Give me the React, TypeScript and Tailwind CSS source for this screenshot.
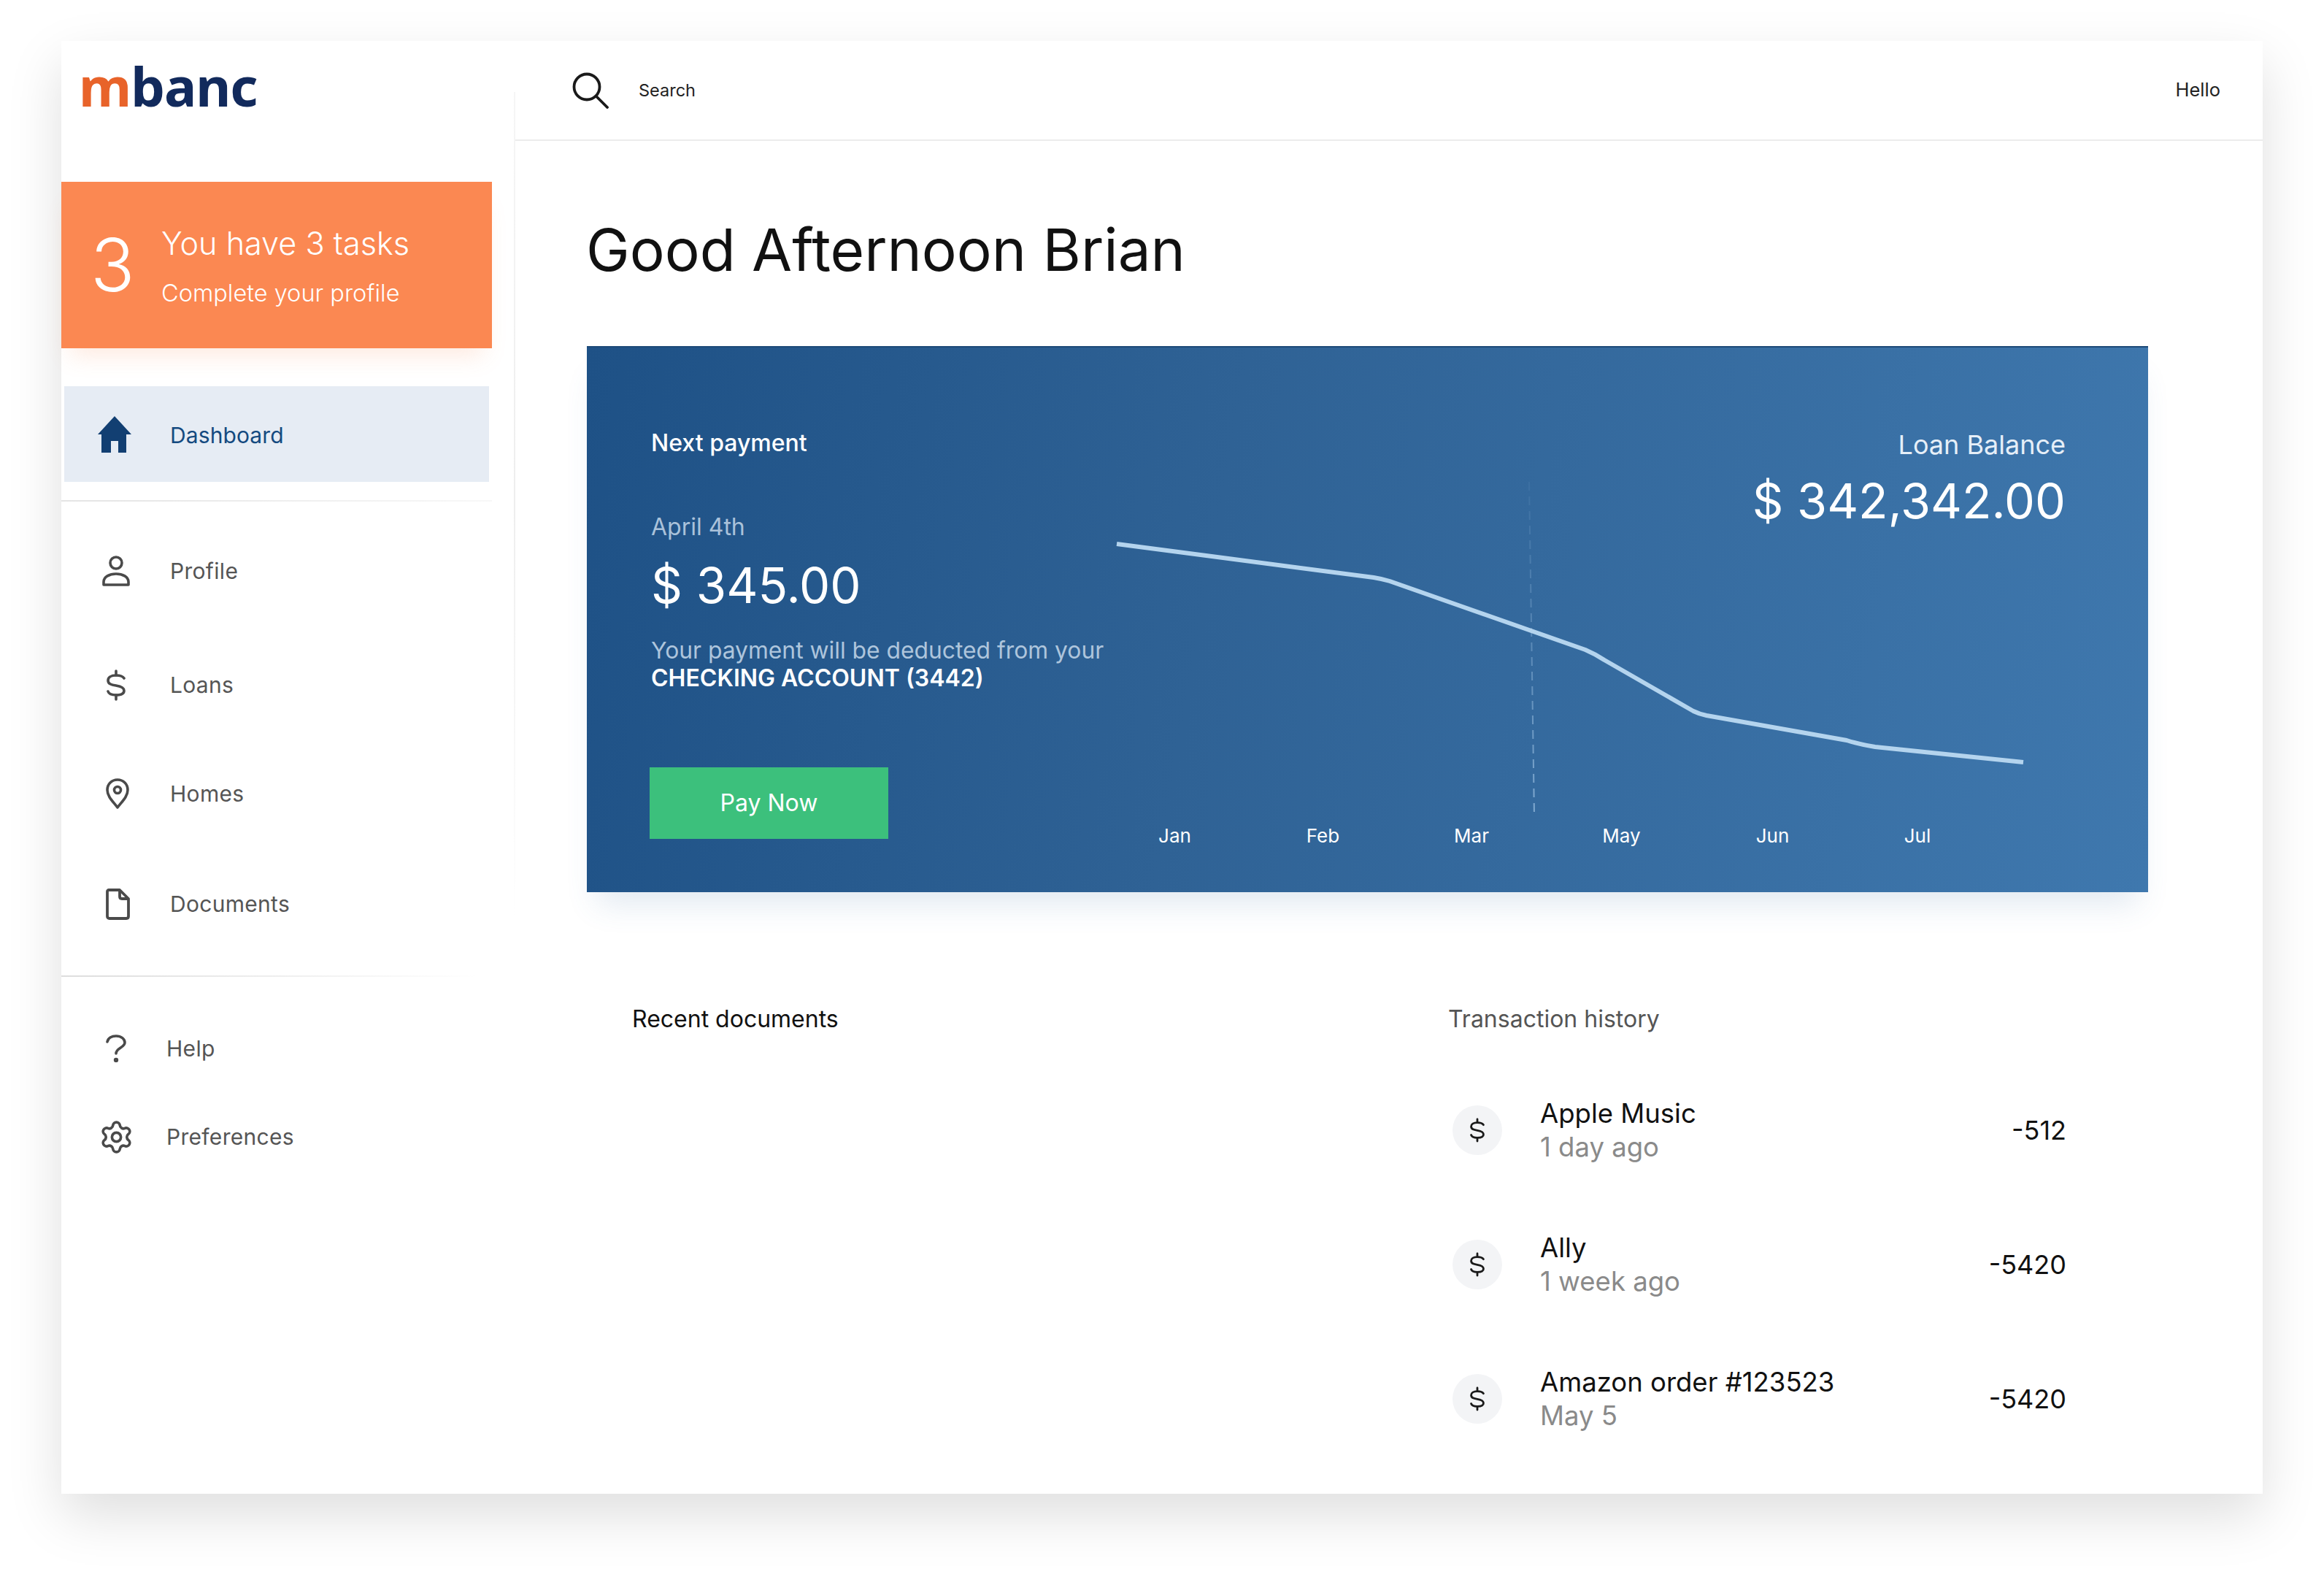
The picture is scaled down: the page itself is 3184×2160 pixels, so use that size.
import React from "react";

const ink = "#4a4a4a";

function Home() {
  return (
    <svg width="46" height="50" viewBox="0 0 46 50" fill="#123f72">
      <path d="M23 0 L46 25 L39 25 L39 50 L28 50 L28 34 L18 34 L18 50 L5 50 L5 25 L0 25 Z" />
    </svg>
  );
}
function Profile() {
  return (
    <svg width="38" height="42" viewBox="0 0 38 42" fill="none" stroke={ink} strokeWidth="3.6" strokeLinejoin="round">
      <circle cx="19" cy="10" r="8" />
      <path d="M2 40 V36 C2 29 10 25 19 25 C28 25 36 29 36 36 V40 Z" />
    </svg>
  );
}
function Dollar({ color = ink, w = 26, h = 43, sw = 3.6 }: { color?: string; w?: number; h?: number; sw?: number }) {
  return (
    <svg width={w} height={h} viewBox="0 0 26 43" fill="none" stroke={color} strokeWidth={sw} strokeLinecap="round">
      <path d="M13 2 V41" strokeDasharray="6 27 6" />
      <path d="M24 12 C22 9 18 8 13 8 C6 8 2 11 2 15 C2 20 7 21 13 22 C19 23 24 25 24 29 C24 33 20 35 13 35 C7 35 3 33 2 30" />
    </svg>
  );
}
function Pin() {
  return (
    <svg width="32" height="42" viewBox="0 0 32 42" fill="none" stroke={ink} strokeWidth="3.6" strokeLinejoin="round" className="ml-[4px]">
      <path d="M16 40 C10 32 2 25 2 16 C2 8 8 2 16 2 C24 2 30 8 30 16 C30 25 22 32 16 40 Z" />
      <circle cx="16" cy="16" r="4.5" />
    </svg>
  );
}
function Doc() {
  return (
    <svg width="33" height="43" viewBox="0 0 33 43" fill="none" stroke={ink} strokeWidth="3.8" strokeLinejoin="round" className="ml-[4px]">
      <path d="M4 2 H19 L31 14 V38 C31 40 30 41 28 41 H5 C3 41 2 40 2 38 V4 C2 3 3 2 4 2 Z" />
      <path d="M19 2 V11 C19 13 20 14 22 14 H31" />
    </svg>
  );
}
function Help() {
  return (
    <svg width="28" height="38" viewBox="0 0 28 38" fill="none" stroke={ink} strokeWidth="3.6" strokeLinecap="round">
      <path d="M2 10 C3 5 8 2 14 2 C21 2 26 6 26 11 C26 18 14 18 14 26" />
      <circle cx="14" cy="35" r="1.4" fill={ink} />
    </svg>
  );
}
function Gear() {
  return (
    <svg width="49" height="49" viewBox="0 0 24 24" fill="none" stroke={ink} strokeWidth="1.8" strokeLinecap="round" strokeLinejoin="round" className="shrink-0">
      <path d="M9.671 4.136a2.34 2.34 0 0 1 4.659 0 2.34 2.34 0 0 0 3.319 1.915 2.34 2.34 0 0 1 2.33 4.033 2.34 2.34 0 0 0 0 3.831 2.34 2.34 0 0 1-2.33 4.033 2.34 2.34 0 0 0-3.319 1.915 2.34 2.34 0 0 1-4.659 0 2.34 2.34 0 0 0-3.32-1.915 2.34 2.34 0 0 1-2.33-4.033 2.34 2.34 0 0 0 0-3.831A2.34 2.34 0 0 1 6.35 6.051a2.34 2.34 0 0 0 3.319-1.915" />
      <circle cx="12" cy="12" r="3" />
    </svg>
  );
}
function Search() {
  return (
    <svg width="50" height="50" viewBox="0 0 50 50" fill="none" stroke="#1a1a1a" strokeWidth="3.8" strokeLinecap="round">
      <circle cx="20" cy="20" r="17.5" />
      <path d="M33 33 L48 48" />
    </svg>
  );
}

function Row({ icon, label, className, narrow }: { icon: React.ReactNode; label: string; className: string; narrow?: boolean }) {
  return (
    <div className={`flex items-center h-[60px] ${className}`}>
      <div className={`flex items-center justify-center shrink-0 pl-[55px] ${narrow ? "w-[144px] pr-[49px]" : "w-[149px] pr-[54px]"}`}>{icon}</div>
      <span className="text-[30px] tracking-[0.3px] text-[#555555]">{label}</span>
    </div>
  );
}

function Tx({ name, when, amount, className }: { name: string; when: string; amount: string; className: string }) {
  return (
    <div className={`flex items-center h-[92px] ${className}`}>
      <div className="w-[68px] h-[68px] rounded-full bg-[#f3f4f6] flex items-center justify-center ml-[5px] shrink-0">
        <Dollar color="#1a1a1a" w={20} h={36} sw={3.6} />
      </div>
      <div className="ml-[52px] flex-1 flex flex-col">
        <span className="text-[36.5px] leading-[46px] text-[#111111]">{name}</span>
        <span className="text-[36.5px] leading-[46px] text-[#8a8a8a]">{when}</span>
      </div>
      <span className="text-[36px] text-[#111111]">{amount}</span>
    </div>
  );
}

export default function App() {
  return (
    <div className="w-[3184px] h-[2160px] bg-white pt-[56px] pl-[84px] font-['Inter',sans-serif]">
      <div className="relative flex w-[3016px] h-[1990px] bg-white shadow-[0_30px_70px_rgba(0,0,0,0.13)]">
        <div className="absolute left-[620px] top-[70px] w-[2px] h-[1130px] bg-gradient-to-b from-[#f6f6f6] via-[#eeeeee] to-[#ffffff]" />
        <aside className="w-[620px] shrink-0 flex flex-col">
          <div className="h-[193px] pl-[24px] pt-[3px] text-[74px] leading-[118px] font-bold font-['Noto_Sans',sans-serif] tracking-[-1px]">
            <span className="text-[#e8632a]">m</span>
            <span className="text-[#122a5c]">banc</span>
          </div>
          <div className="w-[590px] h-[228px] bg-[#fb8852] flex items-center text-white shadow-[0_22px_30px_-12px_rgba(251,136,82,0.18)]">
            <span className="w-[137px] pl-[40px] shrink-0 text-[100px] font-light leading-none">3</span>
            <div className="flex flex-col">
              <span className="text-[43.2px] font-light leading-[54px] pt-[2px]">You have 3 tasks</span>
              <span className="text-[32.5px] font-light leading-[40px] mt-[22px]">Complete your profile</span>
            </div>
          </div>
          <div className="ml-[4px] mt-[52px] w-[582px] h-[131px] bg-[#e6ecf4] flex items-center">
            <div className="w-[145px] pl-[46px] shrink-0 flex items-center"><Home /></div>
            <span className="text-[30px] tracking-[0.1px] text-[#144a80] pt-[3px]">Dashboard</span>
          </div>
          <div className="mt-[25px] h-[2px] w-[590px] bg-gradient-to-r from-[#e4e4e4] to-[#f8f8f8]" />
          <Row className="mt-[65px]" icon={<Profile />} label="Profile" />
          <Row className="mt-[96px]" icon={<Dollar />} label="Loans" />
          <Row className="mt-[89px]" icon={<Pin />} label="Homes" />
          <Row className="mt-[91px]" icon={<Doc />} label="Documents" />
          <div className="mt-[68px] h-[2px] w-[570px] bg-gradient-to-r from-[#dddddd] to-[#ffffff]" />
          <Row className="mt-[68px]" narrow icon={<Help />} label="Help" />
          <Row className="mt-[61px]" narrow icon={<Gear />} label="Preferences" />
        </aside>
        <main className="w-[2396px] flex flex-col">
          <header className="h-[137px] border-b-2 border-[#ececec] ml-[2px] flex items-center pl-[78px] pr-[58px] shrink-0">
            <Search />
            <span className="ml-[41px] text-[23.5px] text-[#222222]">Search</span>
            <span className="ml-auto text-[25.5px] text-[#222222]">Hello</span>
          </header>
          <div className="pl-[100px] pr-[157px] flex flex-col">
            <h1 className="mt-[99px] -ml-[1px] text-[80px] leading-[100px] font-normal text-[#111111]">Good Afternoon Brian</h1>
            <section className="relative mt-[82px] h-[748px] bg-[linear-gradient(100deg,#1e5186,#2f6295_40%,#3f78ae)] border-t-2 border-[#1d4a78] shadow-[0_30px_40px_-14px_rgba(70,120,170,0.16)] flex justify-between pl-[88px] pr-[113px]">
              <svg className="absolute left-0 top-0" width="2139" height="746" viewBox="0 0 2139 746" fill="none">
                <defs>
                  <linearGradient id="dash" gradientUnits="userSpaceOnUse" x1="0" y1="184" x2="0" y2="642">
                    <stop offset="0" stopColor="#7fa9d0" stopOpacity="0.1" />
                    <stop offset="1" stopColor="#8fb6da" stopOpacity="0.85" />
                  </linearGradient>
                </defs>
                <path d="M1291 184 L1298 642" stroke="url(#dash)" strokeWidth="2" strokeDasharray="12 8" />
                <path d="M726 269 L1078 315 Q1090 317 1100 320 L1368 414 Q1382 420 1394 428 L1516 498 Q1524 502 1534 504 L1726 538 Q1745 544 1765 547 L1968 568" stroke="#b4d4ee" strokeWidth="6" strokeLinejoin="round" />
              </svg>
              <div className="relative w-[600px] flex flex-col items-start">
                <span className="mt-[111px] text-[32px] leading-[40px] font-medium text-white">Next payment</span>
                <span className="mt-[75px] text-[32px] leading-[40px] text-[#aac2da]">April 4th</span>
                <span className="mt-[20px] text-[67px] leading-[80px] text-white">$ 345.00</span>
                <span className="mt-[30px] text-[31.8px] leading-[38px] text-[#aec5dc] whitespace-nowrap">Your payment will be deducted from your</span>
                <span className="text-[32px] leading-[38px] font-semibold text-white">CHECKING ACCOUNT (3442)</span>
                <button className="mt-[103px] -ml-[2px] w-[327px] h-[98px] bg-[#3cc07c] text-white text-[32px]">Pay Now</button>
              </div>
              <div className="relative flex flex-col items-end">
                <span className="mt-[111px] text-[36px] leading-[44px] text-[#e6eff8]">Loan Balance</span>
                <span className="mt-[10px] text-[66.5px] leading-[90px] text-white">$ 342,342.00</span>
                <div className="mt-[398px] flex mr-[108px] text-[26px] leading-[32px] text-white">
                  <span className="w-[203px] text-center">Jan</span>
                  <span className="w-[203px] text-center">Feb</span>
                  <span className="w-[204px] text-center">Mar</span>
                  <span className="w-[207px] text-center">May</span>
                  <span className="w-[207px] text-center">Jun</span>
                  <span className="w-[190px] text-center">Jul</span>
                </div>
              </div>
            </section>
            <div className="mt-[154px] flex items-start">
              <div className="w-[1181px] pl-[62px] text-[32px] leading-[40px] text-[#111111]">Recent documents</div>
              <div className="flex-1 pr-[112px]">
                <div className="text-[32px] leading-[40px] text-[#555555] -ml-[1px]">Transaction history</div>
                <Tx className="mt-[86px]" name="Apple Music" when="1 day ago" amount="-512" />
                <Tx className="mt-[92px]" name="Ally" when="1 week ago" amount="-5420" />
                <Tx className="mt-[92px]" name="Amazon order #123523" when="May 5" amount="-5420" />
              </div>
            </div>
          </div>
        </main>
      </div>
    </div>
  );
}
